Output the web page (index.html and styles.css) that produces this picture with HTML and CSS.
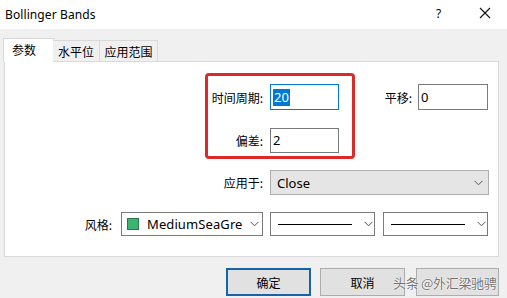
FILE: index.html
```html
<!DOCTYPE html>
<html>
<head>
<meta charset="utf-8">
<link rel="stylesheet" href="styles.css">
</head>
<body>
<div class="window">
  <div class="titlebar">
    <span class="title">Bollinger Bands</span>
    <span class="help">?</span>
    <span class="close"><svg width="12" height="12" viewBox="0 0 12 12"><path d="M1 1L11 11M11 1L1 11" stroke="#111" stroke-width="1.1" fill="none"/></svg></span>
  </div>
  <div class="body">
    <div class="tabs">
      <div class="tab active">参数</div>
      <div class="tab t2">水平位</div>
      <div class="tab t3">应用范围</div>
    </div>
    <div class="panel">
      <div class="row r1">
        <span class="lbl lbl-main">时间周期:</span>
        <div class="input focus"><span class="sel">20</span></div>
        <span class="lbl lbl-shift">平移:</span>
        <div class="input wide">0</div>
      </div>
      <div class="row r2">
        <span class="lbl lbl-main">偏差:</span>
        <div class="input">2</div>
      </div>
      <div class="row r3">
        <span class="lbl lbl-main">应用于:</span>
        <div class="combo gray"><span class="ctext">Close</span><svg class="chev" width="9" height="6" viewBox="0 0 9 6"><path d="M0.5 0.8L4.5 4.8L8.5 0.8" stroke="#555" fill="none"/></svg></div>
      </div>
      <div class="row r4">
        <span class="lbl lbl-style">风格:</span>
        <div class="combo color"><span class="swatch"></span><span class="ctext clip">MediumSeaGre</span><svg class="chev" width="9" height="6" viewBox="0 0 9 6"><path d="M0.5 0.8L4.5 4.8L8.5 0.8" stroke="#555" fill="none"/></svg></div>
        <div class="combo line"><span class="hline"></span><svg class="chev" width="9" height="6" viewBox="0 0 9 6"><path d="M0.5 0.8L4.5 4.8L8.5 0.8" stroke="#555" fill="none"/></svg></div>
        <div class="combo line w2"><span class="hline"></span><svg class="chev" width="9" height="6" viewBox="0 0 9 6"><path d="M0.5 0.8L4.5 4.8L8.5 0.8" stroke="#555" fill="none"/></svg></div>
      </div>
    </div>
    <div class="buttons">
      <div class="btn default">确定</div>
      <div class="btn">取消</div>
      <div class="btn third"></div>
    </div>
  </div>
  <div class="redbox"></div>
  <div class="watermark">头条 @外汇梁驰骋</div>
</div>
</body>
</html>
```

FILE: styles.css
```css
* { box-sizing: border-box; }
html, body { margin: 0; padding: 0; }
body {
  width: 507px;
  height: 298px;
  overflow: hidden;
  font-family: "Noto Sans", "Noto Sans CJK SC", sans-serif;
  color: #000;
  background: #f0f0f0;
}
.window { position: relative; width: 507px; height: 298px; }

.titlebar {
  height: 29px;
  background: #fff;
  display: flex;
  align-items: center;
  padding-left: 5px;
}
.title { font-size: 12px; letter-spacing: 0.1px; flex: 1; margin-top: -1px; }
.help { font-size: 12px; width: 10px; margin-right: 33px; margin-top: -2px; }
.close { width: 12px; height: 12px; margin-right: 16px; margin-top: -3px; display: flex; }

.body { height: 269px; background: #f0f0f0; }

.tabs {
  display: flex;
  align-items: flex-end;
  height: 33px;
  padding-left: 3px;
  position: relative;
  z-index: 2;
}
.tab {
  font-family: "Noto Sans CJK SC", sans-serif;
  font-size: 12px;
  height: 21px;
  border: 1px solid #d9d9d9;
  border-bottom: none;
  background: #f0f0f0;
  display: flex;
  align-items: center;
  justify-content: center;
  margin-bottom: 1px;
}
.tab.active {
  width: 51px;
  height: 24px;
  background: #fff;
  margin-bottom: 0;
  justify-content: flex-start;
  padding-left: 8px;
  padding-bottom: 2px;
}
.tab.t2 { width: 47px; margin-left: -1px; border-left: none; }
.tab.t3 { width: 59px; margin-left: -1px; }

.panel {
  margin-left: 4px;
  width: 495px;
  height: 196px;
  margin-top: -1px;
  background: #fff;
  border: 1px solid #d9d9d9;
  padding-top: 22px;
  display: flex;
  flex-direction: column;
}
.row { display: flex; align-items: center; }
.r1 { height: 26px; }
.r2 { height: 25px; margin-top: 18px; }
.r3 { height: 25px; margin-top: 17px; }
.r4 { height: 24px; margin-top: 17px; }

.lbl {
  font-family: "Noto Sans CJK SC", sans-serif;
  font-size: 12px;
  text-align: right;
  flex: none;
}
.lbl-main { width: 258px; margin-right: 7px; }
.lbl-shift { width: 29px; margin-left: 44px; margin-right: 6px; }
.lbl-style { width: 107px; margin-right: 9px; }

.input {
  width: 69px;
  height: 100%;
  border: 1px solid #7a7a7a;
  font-family: "Noto Sans", sans-serif;
  font-size: 13px;
  padding-left: 2px;
  display: flex;
  align-items: center;
  line-height: 17px;
}
.input.wide { width: 70px; }
.input.focus { border-color: #0078d7; }
.sel { background: #0078d7; color: #fff; padding: 0 1px; }

.combo {
  height: 100%;
  border: 1px solid #7a7a7a;
  display: flex;
  align-items: center;
  font-family: "Noto Sans", sans-serif;
  font-size: 13px;
  position: relative;
  flex: none;
}
.combo.gray { width: 219px; background: #e5e5e5; border-color: #adadad; padding-left: 6px; }
.combo .ctext { flex: 1; }
.combo .chev { margin-right: 5px; flex: none; }
.combo.color { width: 142px; margin-right: 7px; padding-left: 5px; }
.swatch {
  width: 12px; height: 12px;
  background: #3cb371;
  border: 1px solid #2a7a4e;
  margin-right: 8px;
  flex: none;
}
.clip { white-space: nowrap; width: 94px; letter-spacing: 0.1px; }
.combo.color .ctext { flex: none; margin-right: 9px; }
.combo.line { width: 105px; margin-right: 8px; padding-left: 7px; }
.combo.line.w2 { margin-right: 0; }
.hline { width: 74px; height: 1px; background: #000; margin-right: 12px; flex: none; }

.buttons {
  display: flex;
  padding-left: 226px;
  margin-top: 11px;
  gap: 9px;
}
.btn {
  width: 85px;
  height: 28px;
  border: 1px solid #adadad;
  background: #e1e1e1;
  font-family: "Noto Sans CJK SC", sans-serif;
  font-size: 12px;
  display: flex;
  align-items: center;
  justify-content: center;
  color: #000;
}
.btn.default { border: 2px solid #1763a8; }
.btn.third { width: 83px; margin-left: 2px; }

.redbox {
  position: absolute;
  left: 205px;
  top: 73px;
  width: 150px;
  height: 86px;
  border: 3px solid #dc2a2a;
  border-radius: 4px;
}
.watermark {
  position: absolute;
  left: 393px;
  top: 273px;
  font-family: "Noto Sans CJK SC", sans-serif;
  font-size: 13px;
  color: rgba(70, 70, 70, 0.75);
  text-shadow: 0 0 2px #fff, 0 0 1px #fff;
  white-space: nowrap;
  letter-spacing: -0.3px;
}
```
